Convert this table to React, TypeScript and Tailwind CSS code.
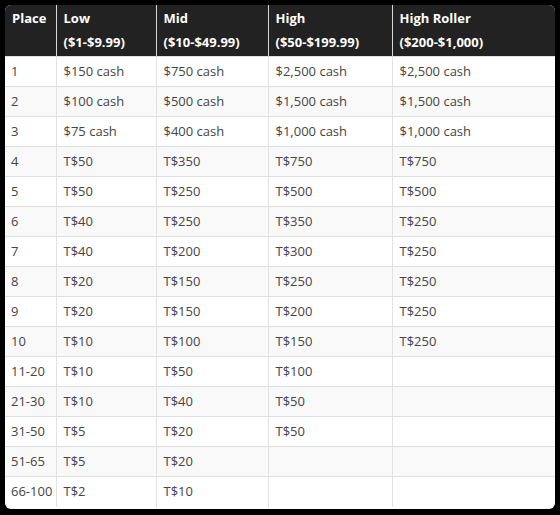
const tiers = [
  { label: "Low", range: "($1-$9.99)" },
  { label: "Mid", range: "($10-$49.99)" },
  { label: "High", range: "($50-$199.99)" },
  { label: "High Roller", range: "($200-$1,000)" },
];

const rows: string[][] = [
  ["1", "$150 cash", "$750 cash", "$2,500 cash", "$2,500 cash"],
  ["2", "$100 cash", "$500 cash", "$1,500 cash", "$1,500 cash"],
  ["3", "$75 cash", "$400 cash", "$1,000 cash", "$1,000 cash"],
  ["4", "T$50", "T$350", "T$750", "T$750"],
  ["5", "T$50", "T$250", "T$500", "T$500"],
  ["6", "T$40", "T$250", "T$350", "T$250"],
  ["7", "T$40", "T$200", "T$300", "T$250"],
  ["8", "T$20", "T$150", "T$250", "T$250"],
  ["9", "T$20", "T$150", "T$200", "T$250"],
  ["10", "T$10", "T$100", "T$150", "T$250"],
  ["11-20", "T$10", "T$50", "T$100", ""],
  ["21-30", "T$10", "T$40", "T$50", ""],
  ["31-50", "T$5", "T$20", "T$50", ""],
  ["51-65", "T$5", "T$20", "", ""],
  ["66-100", "T$2", "T$10", "", ""],
];

export default function App() {
  return (
    <div className="w-[560px] h-[515px] bg-black p-[5px]">
      <div
        className="h-[504px] w-[550px] overflow-hidden rounded-[6px] bg-white"
        style={{ fontFamily: '"Open Sans", sans-serif' }}
      >
        <table className="w-[550px] table-fixed border-collapse text-[13px]">
          <colgroup>
            <col className="w-[51px]" />
            <col className="w-[100px]" />
            <col className="w-[112px]" />
            <col className="w-[124px]" />
            <col className="w-[163px]" />
          </colgroup>
          <thead>
            <tr className="bg-[#222222] text-white">
              <th className="pl-[7px] pr-0 pt-px pb-[2px] text-left align-top font-bold leading-[24px]">
                Place
              </th>
              {tiers.map((t) => (
                <th
                  key={t.label}
                  className="border-l border-[#d8d8d8] pl-[7px] pr-0 pt-px pb-[2px] text-left align-top font-bold leading-[24px]"
                >
                  <div>{t.label}</div>
                  <div>{t.range}</div>
                </th>
              ))}
            </tr>
          </thead>
          <tbody className="text-[#444444]">
            {rows.map((r) => (
              <tr key={r[0]} className="h-[30px] border-t border-[#dedede] even:bg-[#f9f9f9]">
                {r.map((c, i) => (
                  <td
                    key={i}
                    className={
                      i === 0
                        ? "h-[29px] whitespace-nowrap pl-[6px] pr-0 py-0 leading-[29px]"
                        : "h-[29px] whitespace-nowrap border-l border-[#e2e2e2] pl-[7px] pr-0 py-0 leading-[29px]"
                    }
                  >
                    {c}
                  </td>
                ))}
              </tr>
            ))}
          </tbody>
        </table>
      </div>
    </div>
  );
}
